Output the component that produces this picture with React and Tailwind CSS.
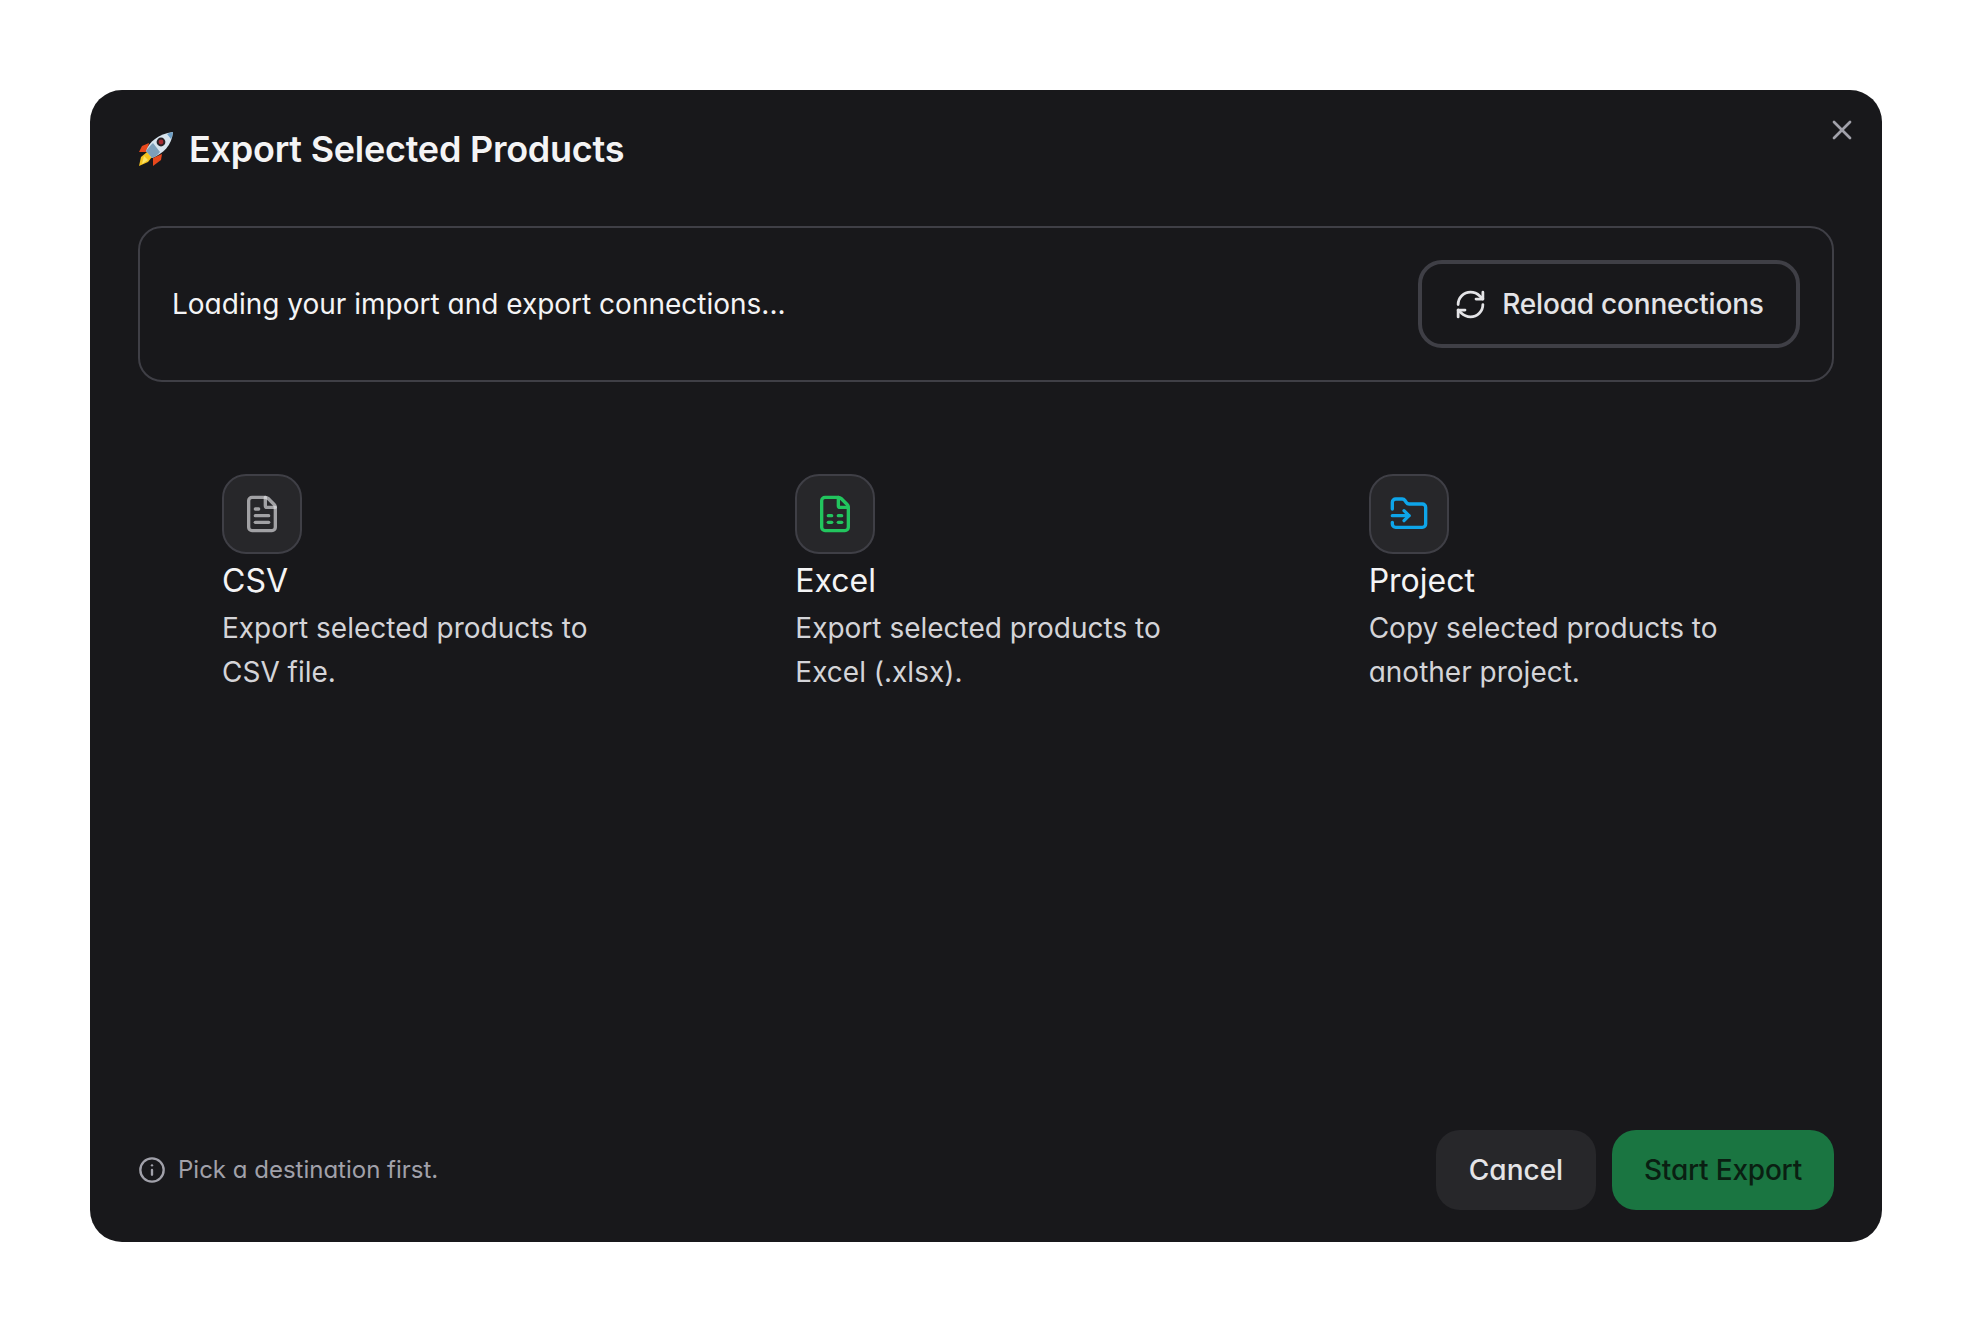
import React from 'react';
import { X, RefreshCw, FileText, FileSpreadsheet, FolderInput, Info } from 'lucide-react';

const targets = [
  {
    title: 'CSV',
    text: 'Export selected products to CSV file.',
    icon: FileText,
    color: 'text-[#e4e4e7] [stroke-opacity:0.65]',
  },
  {
    title: 'Excel',
    text: 'Export selected products to Excel (.xlsx).',
    icon: FileSpreadsheet,
    color: 'text-[#22c55e]',
  },
  {
    title: 'Project',
    text: 'Copy selected products to another project.',
    icon: FolderInput,
    color: 'text-[#0ea5e9]',
  },
];

function Rocket() {
  return (
    <svg width="36" height="36" viewBox="0 0 36 36" className="shrink-0">
      <path d="M11 12 L4 15 L1 21 L9 21 Z" fill="#e8481c" />
      <path d="M24 23 L23 29 L15 35 L15 27 Z" fill="#e8481c" />
      <path d="M9 21 L3 26 L1 35 L10 31 L14 26 Z" fill="#f7c41e" />
      <path d="M6 25 L4 33 L10 29 Z" fill="#fbe56a" />
      <path d="M8 20 C11 11 20 3 35 1 C34 14 25 23 14 27 Z" fill="#d7e4ee" />
      <path d="M8 20 C10 17 12 15 15 12 L22 21 C20 24 17 26 14 27 Z" fill="#7d9fba" />
      <path d="M29 3 C31 2 33 1.5 35 1 C34.6 3.5 34 6 33 8 Z" fill="#6d9fc7" />
      <circle cx="23" cy="11" r="4.4" fill="#2a2226" />
      <circle cx="23" cy="11" r="2.4" fill="#a52a30" />
    </svg>
  );
}

export default function App() {
  return (
    <div className="w-full min-h-screen bg-white p-[90px] font-['Inter',sans-serif] [font-feature-settings:'cv11']">
      <div className="relative flex flex-col h-[1152px] rounded-[32px] bg-[#18181b] px-[48px] pb-[32px] pt-[37px]">
        <button className="absolute top-[24px] right-[24px] text-[#a1a1aa]">
          <X size={32} strokeWidth={2} />
        </button>

        <div className="flex items-center gap-[15px] h-[44px]">
          <Rocket />
          <h1 className="text-[36px] leading-[44px] font-semibold tracking-[-0.25px] text-[#f4f4f5]">
            Export Selected Products
          </h1>
        </div>

        <div className="mt-[55px] flex items-center justify-between h-[156px] rounded-[24px] border-2 border-[#3f3f46] pl-[32px] pr-[32px]">
          <p className="text-[28px] text-[#f4f4f5]">Loading your import and export connections...</p>
          <button className="flex items-center gap-[15px] h-[88px] w-[382px] justify-center rounded-[24px] border-4 border-[#3f3f46] text-[28px] font-medium tracking-[-0.2px] text-[#e4e4e7]">
            <RefreshCw size={33} strokeWidth={2} />
            Reload connections
          </button>
        </div>

        <div className="mt-[92px] grid grid-cols-3 gap-[24px]">
          {targets.map((t) => (
            <div key={t.title} className="px-[84px]">
              <div className="flex items-center justify-center w-[80px] h-[80px] rounded-[24px] border-2 border-[#3f3f46] bg-[#27272a]">
                <t.icon size={40} strokeWidth={2} className={t.color} />
              </div>
              <h3 className="mt-[3px] text-[32px] leading-[48px] font-normal text-[#f4f4f5]">{t.title}</h3>
              <p className="mt-[1px] text-[28px] leading-[44px] text-[#d4d4d8]">{t.text}</p>
            </div>
          ))}
        </div>

        <div className="mt-auto flex items-center justify-between">
          <div className="flex items-center gap-[12px] text-[#a1a1aa]">
            <Info size={28} strokeWidth={2} />
            <span className="text-[24px]">Pick a destination first.</span>
          </div>
          <div className="flex items-center gap-[16px]">
            <button className="h-[80px] w-[160px] rounded-[24px] bg-[#27272a] text-[28px] font-medium text-[#e4e4e7]">
              Cancel
            </button>
            <button className="h-[80px] w-[222px] rounded-[24px] bg-[#1a7541] text-[28px] font-medium tracking-[-0.2px] text-[#0a1f12]">
              Start Export
            </button>
          </div>
        </div>
      </div>
    </div>
  );
}
